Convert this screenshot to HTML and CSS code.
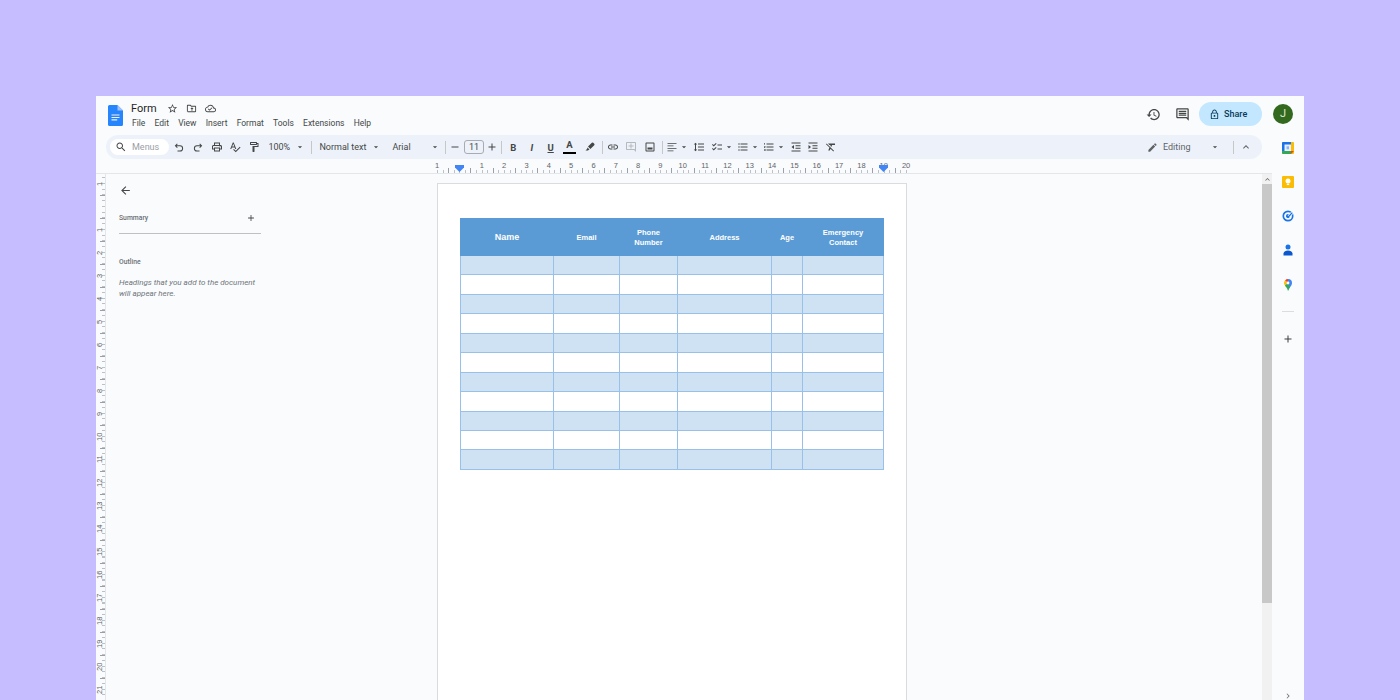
FILE: index.html
```html
<!DOCTYPE html>
<html lang="en">
<head>
  <meta charset="UTF-8" />
  <title>Form - Google Docs</title>
  <link rel="stylesheet" href="styles.css">
</head>
<body>

<svg class="sprite" xmlns="http://www.w3.org/2000/svg">
  <symbol id="i-search" viewBox="0 0 24 24"><path d="M15.5 14h-.79l-.28-.27C15.41 12.59 16 11.11 16 9.5 16 5.91 13.09 3 9.5 3S3 5.91 3 9.5 5.91 16 9.5 16c1.61 0 3.09-.59 4.23-1.57l.27.28v.79l5 4.99L20.49 19l-4.99-5zm-6 0C7.01 14 5 11.99 5 9.5S7.01 5 9.5 5 14 7.01 14 9.5 11.99 14 9.5 14z"/></symbol>
  <symbol id="i-undo" viewBox="0 0 24 24"><path d="M8 5 3.5 9.5 8 14l1.4-1.4-2.1-2.1H14a4 4 0 0 1 0 8.500H9v2h5a6 6 0 0 0 0-12.500H7.300l2.100-2.100z"/></symbol>
  <symbol id="i-redo" viewBox="0 0 24 24"><path d="M16 5l4.500 4.500L16 14l-1.400-1.400 2.100-2.100H10a4 4 0 0 0 0 8.500h5v2h-5a6 6 0 0 1 0-12.500h6.700l-2.100-2.100z"/></symbol>
  <symbol id="i-print" viewBox="0 0 24 24"><path d="M19 8h-1V3H6v5H5c-1.660 0-3 1.340-3 3v6h4v4h12v-4h4v-6c0-1.660-1.340-3-3-3zM8 5h8v3H8V5zm8 14H8v-4h8v4zm4-4h-2v-2H6v2H4v-4c0-.55.45-1 1-1h14c.55 0 1 .45 1 1v4z"/><circle cx="18" cy="11.500" r="1"/></symbol>
  <symbol id="i-spell" viewBox="0 0 24 24"><path d="M12.450 16h2.090L9.430 3H7.570L2.460 16h2.090l1.120-3h5.640l1.140 3zm-6.020-5L8.500 5.480 10.570 11H6.430zm15.160.59l-8.090 8.090L9.830 16l-1.410 1.410 5.090 5.090L23 13l-1.410-1.410z"/></symbol>
  <symbol id="i-paint" viewBox="0 0 24 24"><path d="M18 4V3c0-.55-.45-1-1-1H5c-.55 0-1 .45-1 1v4c0 .55.45 1 1 1h12c.55 0 1-.45 1-1V6h1v4H9v11c0 .55.45 1 1 1h2c.55 0 1-.45 1-1v-9h8V4h-3zm-2 2H6V4h10v2zm-5 14v-8h0v8z"/></symbol>
  <symbol id="i-caret" viewBox="0 0 24 24"><path d="M7 10l5 5 5-5z"/></symbol>
  <symbol id="i-minus" viewBox="0 0 24 24"><path d="M5 11h14v2H5z"/></symbol>
  <symbol id="i-plus" viewBox="0 0 24 24"><path d="M19 13h-6v6h-2v-6H5v-2h6V5h2v6h6v2z"/></symbol>
  <symbol id="i-marker" viewBox="0 0 24 24"><path d="M18.500 3.500a2 2 0 0 0-2.800 0L8 11.200l4.800 4.800 7.700-7.700a2 2 0 0 0 0-2.800zM7 13l-1 3-3 3h5l1-1 2-1z"/></symbol>
  <symbol id="i-link" viewBox="0 0 24 24"><path d="M3.900 12c0-1.710 1.390-3.100 3.100-3.100h4V7H7c-2.760 0-5 2.240-5 5s2.240 5 5 5h4v-1.900H7c-1.710 0-3.100-1.390-3.100-3.100zM8 13h8v-2H8v2zm9-6h-4v1.900h4c1.710 0 3.100 1.390 3.100 3.100s-1.390 3.100-3.100 3.100h-4V17h4c2.760 0 5-2.240 5-5s-2.240-5-5-5z"/></symbol>
  <symbol id="i-comment-add" viewBox="0 0 24 24"><path d="M22 4c0-1.100-.9-2-2-2H4c-1.100 0-2 .9-2 2v12c0 1.100.9 2 2 2h14l4 4V4zm-2 13.170L18.830 16H4V4h16v13.170zM13 5h-2v4H7v2h4v4h2v-4h4V9h-4z"/></symbol>
  <symbol id="i-image" viewBox="0 0 24 24"><path d="M19 3H5c-1.100 0-2 .9-2 2v14c0 1.100.9 2 2 2h14c1.100 0 2-.9 2-2V5c0-1.100-.9-2-2-2zm0 16H5V5h14v14zM7 13h10v4H7z"/></symbol>
  <symbol id="i-align" viewBox="0 0 24 24"><path d="M3 4h18v1.700H3zM3 9h12v1.700H3zM3 14h18v1.700H3zM3 19h12v1.700H3z"/></symbol>
  <symbol id="i-spacing" viewBox="0 0 24 24"><path d="M6 7h2.500L5 3.500 1.500 7H4v10H1.500L5 20.500 8.500 17H6V7zm4-2v2h12V5H10zm0 14h12v-2H10v2zm0-6h12v-2H10v2z"/></symbol>
  <symbol id="i-check" viewBox="0 0 24 24"><path d="M22 7h-9v2h9V7zm0 8h-9v2h9v-2zM5.540 11L2 7.460l1.410-1.410 2.120 2.120 4.240-4.240 1.410 1.410L5.540 11zm0 8L2 15.460l1.410-1.410 2.120 2.120 4.240-4.240 1.410 1.410L5.540 19z"/></symbol>
  <symbol id="i-bullets" viewBox="0 0 24 24"><path d="M4 10.500c-.83 0-1.500.67-1.500 1.500s.67 1.500 1.500 1.500 1.500-.67 1.500-1.500-.67-1.500-1.500-1.500zm0-6c-.83 0-1.500.67-1.500 1.500S3.170 7.500 4 7.500 5.500 6.830 5.500 6 4.830 4.500 4 4.500zm0 12c-.83 0-1.500.68-1.500 1.500s.68 1.500 1.500 1.500 1.500-.68 1.500-1.500-.67-1.500-1.500-1.500zM7 19h14v-2H7v2zm0-6h14v-2H7v2zm0-8v2h14V5H7z"/></symbol>
  <symbol id="i-numbers" viewBox="0 0 24 24"><path d="M2 17h2v.5H3v1h1v.5H2v1h3v-4H2v1zm1-9h1V4H2v1h1v3zm-1 3h1.800L2 13.100v.9h3v-1H3.200L5 10.900V10H2v1zm5-6v2h14V5H7zm0 14h14v-2H7v2zm0-6h14v-2H7v2z"/></symbol>
  <symbol id="i-outdent" viewBox="0 0 24 24"><path d="M3 3h18v1.800H3zM3 19.200h18V21H3zM11 8.500h10v1.800H11zM11 13.700h10v1.800H11zM8 8l-5 4 5 4z"/></symbol>
  <symbol id="i-indent" viewBox="0 0 24 24"><path d="M3 3h18v1.800H3zM3 19.200h18V21H3zM11 8.500h10v1.800H11zM11 13.700h10v1.800H11zM3 8l5 4-5 4z"/></symbol>
  <symbol id="i-clear" viewBox="0 0 24 24"><path d="M3.270 5L2 6.270l6.970 6.970L6.500 19h3l1.570-3.660L16.730 21 18 19.730 3.550 5.270 3.270 5zM6 5v.18L8.820 8h2.400l-.72 1.680 2.100 2.100L14.210 8H20V5H6z"/></symbol>
  <symbol id="i-pencil" viewBox="0 0 24 24"><path d="M3 17.250V21h3.750L17.810 9.940l-3.750-3.750L3 17.250zM20.710 7.040c.39-.39.39-1.020 0-1.410l-2.340-2.340c-.39-.39-1.020-.39-1.410 0l-1.830 1.830 3.750 3.750 1.830-1.830z"/></symbol>
  <symbol id="i-up" viewBox="0 0 24 24"><path d="M12 8l-6 6 1.410 1.410L12 10.830l4.590 4.580L18 14z"/></symbol>
</svg>

<div class="window">

  <header class="topbar">
    <svg class="docs-logo" viewBox="0 0 15 21">
      <path d="M9.500 0H1.500A1.500 1.500 0 0 0 0 1.500v18A1.500 1.500 0 0 0 1.500 21h12a1.500 1.500 0 0 0 1.500-1.500V5.500z" fill="#2684fc"/>
      <path d="M9.500 0v5.500H15z" fill="#a1c2fa"/>
      <path d="M3.500 9.500h8v1.100h-8zM3.500 11.900h8V13h-8zM3.500 14.300h5.700v1.100H3.500z" fill="#f1f1f1"/>
    </svg>
    <div class="doc-meta">
      <div class="doc-title-row">
        <span class="doc-title">Form</span>
        <svg class="meta-icon" viewBox="0 0 24 24"><path d="M22 9.240l-7.190-.62L12 2 9.190 8.630 2 9.240l5.460 4.730L5.820 21 12 17.270 18.180 21l-1.630-7.030L22 9.240zM12 15.400l-3.760 2.270 1-4.280-3.320-2.880 4.380-.38L12 6.100l1.710 4.040 4.380.38-3.320 2.880 1 4.280L12 15.400z"/></svg>
        <svg class="meta-icon" viewBox="0 0 24 24"><path d="M20 6h-8l-2-2H4c-1.100 0-2 .9-2 2v12c0 1.100.9 2 2 2h16c1.100 0 2-.9 2-2V8c0-1.100-.9-2-2-2zm0 12H4V6h5.170l2 2H20v10zM12 17v-4H9.500l3.500-3.500 3.500 3.500H14v4z"/></svg>
        <svg class="meta-icon" viewBox="0 0 24 24"><path d="M19.350 10.040C18.670 6.590 15.640 4 12 4 9.110 4 6.600 5.640 5.350 8.040 2.340 8.360 0 10.910 0 14c0 3.310 2.690 6 6 6h13c2.760 0 5-2.240 5-5 0-2.640-2.050-4.780-4.650-4.960zM19 18H6c-2.210 0-4-1.790-4-4 0-2.050 1.530-3.760 3.560-3.970l1.070-.11.5-.95C8.080 7.140 9.940 6 12 6c2.620 0 4.880 1.860 5.390 4.430l.3 1.500 1.530.11c1.560.1 2.780 1.410 2.780 2.960 0 1.650-1.350 3-3 3zm-9-3.820l-2.090-2.090L6.500 13.500 10 17l6.010-6.010-1.410-1.410z"/></svg>
      </div>
      <nav class="menubar">
        <span>File</span><span>Edit</span><span>View</span><span>Insert</span><span>Format</span><span>Tools</span><span>Extensions</span><span>Help</span>
      </nav>
    </div>
    <div class="top-actions">
      <svg class="top-icon" viewBox="0 0 24 24"><path d="M13 3c-4.970 0-9 4.030-9 9H1l3.890 3.890.07.14L9 12H6c0-3.870 3.130-7 7-7s7 3.130 7 7-3.130 7-7 7c-1.930 0-3.680-.79-4.940-2.060l-1.420 1.420C8.270 19.990 10.510 21 13 21c4.970 0 9-4.030 9-9s-4.030-9-9-9zm-1 5v5l4.280 2.540.72-1.210-3.500-2.080V8H12z"/></svg>
      <svg class="top-icon" viewBox="0 0 24 24"><path d="M20 2H4c-1.100 0-2 .9-2 2v12c0 1.100.9 2 2 2h14l4 4V4c0-1.100-.9-2-2-2zm0 15.170L18.830 16H4V4h16v13.170zM6 12h12v2H6zm0-3h12v2H6zm0-3h12v2H6z"/></svg>
      <div class="share-btn">
        <svg class="share-lock" viewBox="0 0 24 24"><path d="M18 8h-1V6c0-2.760-2.240-5-5-5S7 3.240 7 6v2H6c-1.100 0-2 .9-2 2v10c0 1.100.9 2 2 2h12c1.100 0 2-.9 2-2V10c0-1.100-.9-2-2-2zM9 6c0-1.660 1.340-3 3-3s3 1.340 3 3v2H9V6zm9 14H6V10h12v10zm-6-3c1.100 0 2-.9 2-2s-.9-2-2-2-2 .9-2 2 .9 2 2 2z"/></svg>
        <span>Share</span>
      </div>
      <div class="avatar">J</div>
    </div>
  </header>

  <div class="workspace">
    <div class="editor">

      <div class="toolbar">
        <div class="menu-search">
          <svg class="tool-svg"><use href="#i-search"/></svg>
          <span>Menus</span>
        </div>
        <div class="tool"><svg class="tool-svg"><use href="#i-undo"/></svg></div>
        <div class="tool"><svg class="tool-svg"><use href="#i-redo"/></svg></div>
        <div class="tool"><svg class="tool-svg"><use href="#i-print"/></svg></div>
        <div class="tool"><svg class="tool-svg"><use href="#i-spell"/></svg></div>
        <div class="tool"><svg class="tool-svg"><use href="#i-paint"/></svg></div>
        <div class="select select-zoom"><span>100%</span><svg class="caret"><use href="#i-caret"/></svg></div>
        <div class="sep"></div>
        <div class="select select-style"><span>Normal text</span><svg class="caret"><use href="#i-caret"/></svg></div>
        <div class="select select-font"><span>Arial</span><svg class="caret"><use href="#i-caret"/></svg></div>
        <div class="sep"></div>
        <div class="tool tool-narrow"><svg class="tool-svg"><use href="#i-minus"/></svg></div>
        <div class="font-size">11</div>
        <div class="tool tool-narrow"><svg class="tool-svg"><use href="#i-plus"/></svg></div>
        <div class="sep"></div>
        <div class="tool glyph glyph-bold">B</div>
        <div class="tool glyph glyph-italic">I</div>
        <div class="tool glyph glyph-under">U</div>
        <div class="tool glyph glyph-color">A</div>
        <div class="tool tool-marker"><svg class="tool-svg"><use href="#i-marker"/></svg></div>
        <div class="sep"></div>
        <div class="tool tool-link"><svg class="tool-svg"><use href="#i-link"/></svg></div>
        <div class="tool tool-off"><svg class="tool-svg"><use href="#i-comment-add"/></svg></div>
        <div class="tool tool-image"><svg class="tool-svg"><use href="#i-image"/></svg></div>
        <div class="sep"></div>
        <div class="tool tool-caret tool-align"><svg class="tool-svg"><use href="#i-align"/></svg><svg class="caret"><use href="#i-caret"/></svg></div>
        <div class="tool"><svg class="tool-svg"><use href="#i-spacing"/></svg></div>
        <div class="tool tool-caret"><svg class="tool-svg"><use href="#i-check"/></svg><svg class="caret"><use href="#i-caret"/></svg></div>
        <div class="tool tool-caret"><svg class="tool-svg"><use href="#i-bullets"/></svg><svg class="caret"><use href="#i-caret"/></svg></div>
        <div class="tool tool-caret"><svg class="tool-svg"><use href="#i-numbers"/></svg><svg class="caret"><use href="#i-caret"/></svg></div>
        <div class="tool"><svg class="tool-svg"><use href="#i-outdent"/></svg></div>
        <div class="tool tool-indent"><svg class="tool-svg"><use href="#i-indent"/></svg></div>
        <div class="tool"><svg class="tool-svg"><use href="#i-clear"/></svg></div>
        <div class="toolbar-right">
          <svg class="tool-svg mode-pencil"><use href="#i-pencil"/></svg>
          <span class="mode-label">Editing</span>
          <svg class="caret mode-caret"><use href="#i-caret"/></svg>
          <div class="sep"></div>
          <svg class="tool-svg collapse"><use href="#i-up"/></svg>
        </div>
      </div>

      <div class="hruler">
        <div class="hruler-scale">
          <span>1</span><span></span><span>1</span><span>2</span><span>3</span><span>4</span><span>5</span><span>6</span><span>7</span><span>8</span><span>9</span><span>10</span><span>11</span><span>12</span><span>13</span><span>14</span><span>15</span><span>16</span><span>17</span><span>18</span><span>19</span><span>20</span>
          <i class="marker marker-left"></i>
          <i class="marker marker-right"></i>
        </div>
      </div>

      <div class="doc-area">
        <div class="vruler">
          <span>1</span><span></span><span>1</span><span>2</span><span>3</span><span>4</span><span>5</span><span>6</span><span>7</span><span>8</span><span>9</span><span>10</span><span>11</span><span>12</span><span>13</span><span>14</span><span>15</span><span>16</span><span>17</span><span>18</span><span>19</span><span>20</span><span>21</span>
        </div>

        <aside class="outline">
          <svg class="back-arrow" viewBox="0 0 24 24"><path d="M20 11H7.830l5.590-5.590L12 4l-8 8 8 8 1.410-1.410L7.830 13H20v-2z"/></svg>
          <div class="summary-row">
            <span class="outline-label">Summary</span>
            <svg class="summary-add"><use href="#i-plus"/></svg>
          </div>
          <div class="outline-label outline-head">Outline</div>
          <p class="outline-hint">Headings that you add to the document will appear here.</p>
        </aside>

        <main class="page">
          <table class="form-table">
            <colgroup>
              <col class="col-name"><col class="col-email"><col class="col-phone"><col class="col-address"><col class="col-age"><col class="col-contact">
            </colgroup>
            <thead>
              <tr>
                <th class="th-name">Name</th>
                <th>Email</th>
                <th>Phone<br>Number</th>
                <th>Address</th>
                <th>Age</th>
                <th>Emergency<br>Contact</th>
              </tr>
            </thead>
            <tbody>
              <tr><td></td><td></td><td></td><td></td><td></td><td></td></tr>
              <tr><td></td><td></td><td></td><td></td><td></td><td></td></tr>
              <tr><td></td><td></td><td></td><td></td><td></td><td></td></tr>
              <tr><td></td><td></td><td></td><td></td><td></td><td></td></tr>
              <tr><td></td><td></td><td></td><td></td><td></td><td></td></tr>
              <tr><td></td><td></td><td></td><td></td><td></td><td></td></tr>
              <tr><td></td><td></td><td></td><td></td><td></td><td></td></tr>
              <tr><td></td><td></td><td></td><td></td><td></td><td></td></tr>
              <tr><td></td><td></td><td></td><td></td><td></td><td></td></tr>
              <tr><td></td><td></td><td></td><td></td><td></td><td></td></tr>
              <tr><td></td><td></td><td></td><td></td><td></td><td></td></tr>
            </tbody>
          </table>
        </main>

        <div class="scrollbar">
          <div class="scroll-btn"><svg class="scroll-arrow"><use href="#i-up"/></svg></div>
          <div class="scroll-thumb"></div>
        </div>
      </div>
    </div>

    <aside class="side-panel">
      <svg class="side-icon" viewBox="0 0 12 12">
        <rect width="12" height="12" rx="1" fill="#fbbc04"/>
        <path d="M0 9h9V0H1a1 1 0 0 0-1 1z" fill="#1a73e8"/>
        <path d="M0 9h9v3H1a1 1 0 0 1-1-1z" fill="#34a853"/>
        <path d="M9 9h3l-3 3z" fill="#ea4335"/>
        <rect x="2.500" y="2.500" width="6.500" height="6.500" fill="#e8f0fe"/>
        <rect x="4.500" y="4.300" width="2.500" height="3" fill="#8ab4f8"/>
      </svg>
      <svg class="side-icon" viewBox="0 0 12 12">
        <rect width="12" height="12" rx="1" fill="#fbbc04"/>
        <circle cx="6" cy="5" r="2.500" fill="#fff"/>
        <rect x="4.800" y="7.800" width="2.400" height="1.300" fill="#fff"/>
      </svg>
      <svg class="side-icon" viewBox="0 0 12 12">
        <circle cx="6" cy="6" r="4.700" fill="none" stroke="#1a73e8" stroke-width="1.700"/>
        <circle cx="6" cy="6" r="2" fill="#1a73e8"/>
        <path d="M6.500 6.500 11 2" fill="none" stroke="#fbfdff" stroke-width="2.600"/>
        <path d="M4.500 5.800 6 7.300 10.300 2.600" fill="none" stroke="#1a73e8" stroke-width="1.400"/>
      </svg>
      <svg class="side-icon" viewBox="0 0 12 12">
        <circle cx="6" cy="3" r="2.500" fill="#1a73e8"/>
        <path d="M1.500 11.500V9.500C1.500 7.500 4 6.500 6 6.500s4.500 1 4.500 3v2z" fill="#0b57d0"/>
      </svg>
      <svg class="side-icon side-maps" viewBox="0 0 12 12">
        <path d="M6 0a4 4 0 0 1 4 4c0 3-3 4.500-4 8z" fill="#4285f4"/>
        <path d="M6 0a4 4 0 0 0-3 1.400L6 4z" fill="#ea4335"/>
        <path d="M3 1.400A4 4 0 0 0 2 4c0 1 .4 1.800.9 2.600L6 4z" fill="#fbbc04"/>
        <path d="M2.900 6.600C4 8.200 5.500 9.500 6 12c.3-1.300 1-2.400 1.800-3.500L6 4z" fill="#34a853"/>
        <circle cx="6" cy="4" r="1.400" fill="#fff"/>
      </svg>
      <div class="side-divider"></div>
      <svg class="side-add"><use href="#i-plus"/></svg>
      <svg class="side-toggle" viewBox="0 0 24 24"><path d="M10 6 8.590 7.410 13.170 12l-4.580 4.590L10 18l6-6z"/></svg>
    </aside>
  </div>
</div>

</body>
</html>
```

FILE: styles.css
```css
* {
  box-sizing: border-box;
}
html, body {
  height: 100%;
}
body {
  margin: 0;
  padding: 96px 96px 0;
  background: #c5bdff;
  font-family: Roboto, 'Liberation Sans', sans-serif;
  color: #444746;
  overflow: hidden;
}
.sprite {
  display: none;
}
svg {
  display: block;
  flex: none;
  fill: currentColor;
}

.window {
  height: 604px;
  background: #f9fbfd;
  display: flex;
  flex-direction: column;
  overflow: hidden;
}

/* top bar */
.topbar {
  height: 39px;
  display: flex;
  flex: none;
  padding-left: 12px;
}
.docs-logo {
  width: 15px;
  height: 21px;
  margin-top: 9px;
}
.doc-meta {
  margin-left: 8px;
}
.doc-title-row {
  display: flex;
  align-items: center;
  height: 14px;
  margin-top: 5px;
}
.doc-title {
  font-size: 11px;
  color: #1f1f1f;
  width: 36px;
}
.meta-icon {
  width: 11px;
  height: 11px;
  margin-right: 8px;
  color: #444746;
}
.menubar {
  display: flex;
  gap: 9.200px;
  font-size: 8.500px;
  margin-top: 1px;
  margin-left: 1px;
  line-height: 14px;
  color: #444746;
}
.top-actions {
  margin-left: auto;
  display: flex;
  align-items: center;
  height: 24px;
  margin-top: 6px;
  margin-right: 11px;
}
.top-icon {
  width: 15px;
  height: 15px;
  margin-left: 14px;
  color: #444746;
}
.share-btn {
  width: 63px;
  height: 24px;
  border-radius: 12px;
  background: #c2e7ff;
  color: #0b3a5c;
  display: flex;
  align-items: center;
  margin-left: 9.500px;
  padding-left: 10px;
  font-size: 9px;
  font-weight: 500;
}
.share-lock {
  width: 11px;
  height: 11px;
  margin-right: 4px;
}
.avatar {
  width: 20px;
  height: 20px;
  border-radius: 50%;
  background: #33691e;
  color: #dfe8d8;
  font-size: 11px;
  line-height: 20px;
  text-align: center;
  margin-left: 11px;
}

/* everything under the top bar */
.workspace {
  flex: 1;
  display: flex;
  min-height: 0;
}
.editor {
  flex: 1;
  display: flex;
  flex-direction: column;
  min-width: 0;
}

/* toolbar */
.toolbar {
  height: 24px;
  flex: none;
  margin: 0 10px;
  background: #edf2fa;
  border-radius: 12px;
  display: flex;
  align-items: center;
  padding-left: 4px;
  font-size: 9px;
  color: #444746;
}
.menu-search {
  width: 59px;
  height: 16px;
  margin-right: 1px;
  background: #fff;
  border-radius: 8px;
  display: flex;
  align-items: center;
  padding-left: 5px;
  color: #9aa0a6;
}
.menu-search .tool-svg {
  color: #444746;
  margin-right: 5px;
}
.tool {
  width: 18.700px;
  height: 16px;
  display: flex;
  align-items: center;
  justify-content: center;
  flex: none;
}
.tool-svg {
  width: 12px;
  height: 12px;
}
.tool-narrow {
  width: 15px;
}
.tool-off {
  color: #b5b9bd;
}
.tool-marker {
  margin: 0 1.500px;
}
.tool-link {
  margin-left: -1px;
}
.tool-image {
  margin-right: 1.500px;
}
.tool-caret {
  width: 26px;
  justify-content: flex-start;
  padding-left: 2.500px;
}
.tool-caret .caret {
  margin-left: 1px;
}
.tool-align {
  width: 26px;
  margin-left: -1px;
}
.tool-indent {
  margin-left: -2px;
}
.caret {
  width: 10px;
  height: 10px;
}
.sep {
  width: 1px;
  height: 13px;
  margin: 0 1.500px;
  background: #c7c7c7;
  flex: none;
}
.select {
  display: flex;
  align-items: center;
  justify-content: space-between;
  flex: none;
}
.select-zoom {
  width: 37px;
  margin-left: 5px;
  margin-right: 4px;
}
.select-style {
  width: 62px;
  margin-left: 6px;
}
.select-font {
  width: 48px;
  margin-left: 11px;
  margin-right: 3.500px;
}
.font-size {
  width: 20px;
  height: 14px;
  margin: 0 1px;
  border: 1px solid #a8abb0;
  border-radius: 3px;
  text-align: center;
  line-height: 12px;
  flex: none;
}
.glyph {
  font-size: 9.500px;
  font-weight: 700;
}
.glyph-italic {
  font-style: italic;
}
.glyph-under {
  text-decoration: underline;
}
.glyph-color {
  align-items: flex-start;
  line-height: 12px;
  position: relative;
}
.glyph-color::after {
  content: "";
  position: absolute;
  left: 2.500px;
  right: 2.500px;
  bottom: 1px;
  height: 2px;
  background: #000;
}
.toolbar-right {
  margin-left: auto;
  display: flex;
  align-items: center;
  padding-right: 10px;
}
.mode-pencil {
  width: 11px;
  height: 11px;
  color: #5f6368;
}
.mode-label {
  margin-left: 5px;
  width: 47px;
  color: #5f6368;
}
.mode-caret {
  margin-right: 11px;
}
.collapse {
  margin-left: 5px;
  color: #5f6368;
}

/* rulers */
.hruler {
  height: 15px;
  flex: none;
  padding-left: 341px;
  border-bottom: 1px solid #e3e6ea;
}
.hruler-scale {
  position: relative;
  width: 470px;
  height: 14px;
  display: flex;
  background:
    repeating-linear-gradient(90deg, #9aa0a6 0 1px, transparent 1px 22.330px) 11.160px 100% / 100% 5px no-repeat,
    repeating-linear-gradient(90deg, #bdc1c6 0 1px, transparent 1px 5.583px) 0 100% / 100% 3px no-repeat;
}
.hruler-scale span {
  width: 22.330px;
  flex: none;
  text-align: center;
  font-family: 'Liberation Sans', sans-serif;
  font-size: 7.500px;
  line-height: 13px;
  color: #5f6368;
}
.hruler-scale span:first-child {
  margin-left: -11px;
}
.marker {
  position: absolute;
  top: 6px;
  width: 9px;
  height: 7px;
  background: #4285f4;
  clip-path: polygon(0 0, 100% 0, 100% 35%, 50% 100%, 0 35%);
}
.marker-left {
  left: 18px;
}
.marker-right {
  left: 442px;
}

.doc-area {
  flex: 1;
  display: flex;
  min-height: 0;
  overflow: hidden;
}
.vruler {
  width: 10px;
  flex: none;
  border-right: 1px solid #e3e6ea;
  display: flex;
  flex-direction: column;
  background:
    repeating-linear-gradient(180deg, #9aa0a6 0 1px, transparent 1px 23px) 100% 20.500px / 5px 100% no-repeat,
    repeating-linear-gradient(180deg, #bdc1c6 0 1px, transparent 1px 5.750px) 100% 3.250px / 3px 100% no-repeat;
}
.vruler span {
  display: block;
  width: 7px;
  height: 23px;
  flex: none;
  font-family: 'Liberation Sans', sans-serif;
  font-size: 7.500px;
  line-height: 7px;
  text-align: center;
  color: #5f6368;
  writing-mode: vertical-rl;
  transform: rotate(180deg);
}
.vruler span:first-child {
  margin-top: -2.500px;
}

/* outline panel */
.outline {
  width: 331px;
  flex: none;
  padding: 10px 0 0 13px;
  color: #5f6368;
}
.back-arrow {
  width: 13px;
  height: 13px;
  color: #444746;
}
.outline-label {
  font-weight: 500;
  font-size: 6.800px;
  color: #6b6f74;
}
.summary-row {
  width: 142px;
  height: 27px;
  margin-top: 10px;
  padding-bottom: 4px;
  display: flex;
  align-items: center;
  justify-content: space-between;
  border-bottom: 1px solid #bdc1c6;
}
.summary-add {
  width: 10px;
  height: 10px;
  margin-right: 5px;
  color: #444746;
}
.outline-head {
  margin-top: 24px;
}
.outline-hint {
  margin: 12px 0 0;
  width: 142px;
  font-style: italic;
  font-size: 8px;
  line-height: 10.500px;
  color: #70757a;
}

/* page and table */
.page {
  width: 470px;
  height: 700px;
  flex: none;
  margin-top: 9px;
  padding: 34px 0 0 22px;
  background: #fff;
  border: 1px solid #dadce0;
}
.form-table {
  width: 423px;
  table-layout: fixed;
  border-collapse: collapse;
  font-family: 'Liberation Sans', sans-serif;
}
.col-name { width: 93px; }
.col-email { width: 66px; }
.col-phone { width: 58px; }
.col-address { width: 94px; }
.col-age { width: 31px; }
.col-contact { width: 81px; }
.form-table th {
  height: 37px;
  padding: 1px 0 0;
  background: #5b9bd5;
  color: #fff;
  font-size: 7.500px;
  line-height: 9.500px;
  font-weight: 700;
  text-align: center;
  border: 1px solid #5b9bd5;
}
.form-table .th-name {
  font-size: 9px;
}
.form-table td {
  height: 19.450px;
  padding: 0;
  border: 1px solid #98c0e8;
}
.form-table tbody tr:nth-child(odd) td {
  background: #cfe2f3;
}

/* scrollbar */
.scrollbar {
  width: 10px;
  flex: none;
  margin-left: auto;
  background: #f1f1f1;
}
.scroll-btn {
  height: 10px;
  display: flex;
  align-items: center;
  justify-content: center;
  color: #5f6368;
}
.scroll-arrow {
  width: 9px;
  height: 9px;
}
.scroll-thumb {
  height: 419px;
  background: #c8c8c8;
}

/* side panel */
.side-panel {
  width: 32px;
  flex: none;
  position: relative;
  display: flex;
  flex-direction: column;
  align-items: center;
  padding-top: 7px;
  gap: 22px;
}
.side-icon {
  width: 12px;
  height: 12px;
}
.side-maps {
  margin-top: 1px;
}
.side-divider {
  width: 12px;
  height: 1px;
  background: #dadce0;
  margin-top: -2px;
}
.side-add {
  width: 12px;
  height: 12px;
  margin-top: -1px;
  color: #3c4043;
}
.side-toggle {
  position: absolute;
  left: 11px;
  bottom: -1px;
  width: 10px;
  height: 10px;
  color: #70757a;
}
```
